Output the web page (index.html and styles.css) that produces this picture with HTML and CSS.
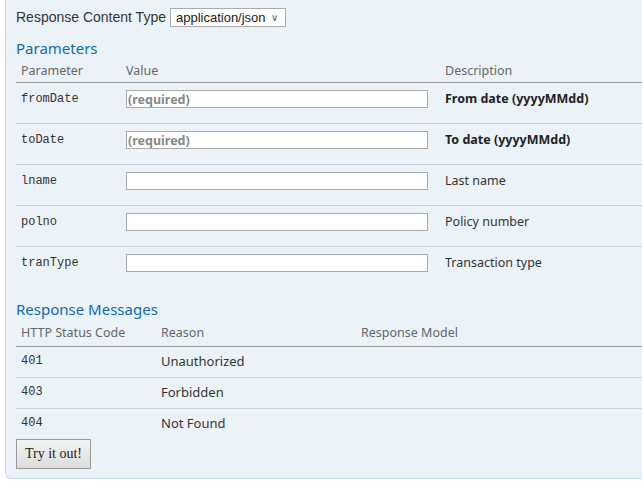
FILE: index.html
```html
<!DOCTYPE html>
<html>
<head>
<meta charset="utf-8">
<link rel="stylesheet" href="styles.css">
</head>
<body>
<div class="panel">
  <div class="content-type">
    <label class="ct-label">Response Content Type</label>
    <span class="select">application/json <span class="chev">&#8744;</span></span>
  </div>
  <h4 class="section-title">Parameters</h4>
  <table class="params">
    <thead>
      <tr><th class="c1">Parameter</th><th class="c2">Value</th><th class="c3">Description</th></tr>
    </thead>
    <tbody>
      <tr><td class="code">fromDate</td><td><input class="inp" placeholder="(required)"></td><td class="desc strong">From date (yyyyMMdd)</td></tr>
      <tr><td class="code">toDate</td><td><input class="inp" placeholder="(required)"></td><td class="desc strong">To date (yyyyMMdd)</td></tr>
      <tr><td class="code">lname</td><td><input class="inp"></td><td class="desc">Last name</td></tr>
      <tr><td class="code">polno</td><td><input class="inp"></td><td class="desc">Policy number</td></tr>
      <tr><td class="code">tranType</td><td><input class="inp"></td><td class="desc">Transaction type</td></tr>
    </tbody>
  </table>
  <h4 class="section-title resp">Response Messages</h4>
  <table class="responses">
    <thead>
      <tr><th class="r1">HTTP Status Code</th><th class="r2">Reason</th><th class="r3">Response Model</th></tr>
    </thead>
    <tbody>
      <tr><td class="code">401</td><td>Unauthorized</td><td></td></tr>
      <tr><td class="code">403</td><td>Forbidden</td><td></td></tr>
      <tr><td class="code">404</td><td>Not Found</td><td></td></tr>
    </tbody>
  </table>
  <button class="try">Try it out!</button>
</div>
</body>
</html>
```
FILE: styles.css
```css
html, body {
  margin: 0;
  padding: 0;
  overflow: hidden;
  background: #ffffff;
}
body {
  width: 642px;
  height: 482px;
  font-family: "Noto Sans", "Open Sans", sans-serif;
}
.panel {
  margin-left: 5px;
  margin-top: -10px;
  width: 637px;
  box-sizing: border-box;
  background: #ebf3f9;
  border: 1px solid #c3d9ec;
  border-right: none;
  border-radius: 0 0 0 6px;
  padding: 16px 0 9px 10px;
}
.content-type {
  display: flex;
  align-items: center;
  height: 20px;
}
.ct-label {
  font-family: "Liberation Sans", Arial, sans-serif;
  font-size: 14px;
  color: #333;
  margin-right: 4px;
}
.select {
  display: inline-flex;
  align-items: center;
  height: 19px;
  box-sizing: border-box;
  width: 116px;
  background: #fff;
  border: 1px solid #aaa;
  font-family: "Liberation Sans", Arial, sans-serif;
  font-size: 13px;
  color: #222;
  padding-left: 5px;
}
.chev {
  font-size: 10px;
  color: #555;
  margin-left: 5px;
}
.section-title {
  margin: 10px 0 0 0;
  font-weight: normal;
  font-size: 15px;
  color: #0f6ab4;
  height: 22px;
  line-height: 22px;
}
.section-title.resp {
  margin-top: 11px;
}
table {
  border-collapse: collapse;
  width: 100%;
  table-layout: fixed;
}
th {
  text-align: left;
  font-weight: normal;
  font-size: 12.5px;
  color: #666;
  padding: 3px 0 2px 5px;
  border-bottom: 1px solid #999;
  vertical-align: top;
  line-height: 18px;
}
.responses th { padding-top: 4px; padding-bottom: 4px; }
.c1 { width: 100px; }
.c2 { width: 314px; }
td {
  padding: 7px 0 0 5px;
  vertical-align: top;
  font-size: 13px;
  color: #333;
  line-height: 18px;
}
.params td { height: 33px; border-bottom: 1px solid #c9cfd4; }
.params tr:last-child td { border-bottom: none; }
.code {
  font-family: "Liberation Mono", "Courier New", monospace;
  font-size: 12px;
  color: #333;
}
.inp {
  display: block;
  width: 302px;
  height: 18px;
  box-sizing: border-box;
  border: 1px solid #aaa;
  background: #fff;
  margin: 0;
  padding: 0 1px;
  font-family: "Noto Sans", sans-serif;
  font-size: 12.5px;
}
.inp::placeholder {
  color: #888;
  font-weight: bold;
  opacity: 1;
}
.desc { font-size: 12.5px; }
.desc.strong {
  font-weight: bold;
  color: #222;
}
.r1 { width: 135px; }
.r2 { width: 195px; }
.responses td {
  padding-top: 5px;
  height: 25px;
  border-bottom: 1px solid #c9cfd4;
}
.responses tr:last-child td { border-bottom: none; }
.try {
  display: block;
  margin: 0;
  width: 75px;
  height: 30px;
  font-family: "Liberation Serif", "Times New Roman", serif;
  font-size: 14px;
  color: #222;
  border: 1px solid #999;
  background: linear-gradient(#f4f4f4, #dcdcdc);
  padding: 0;
}
```
